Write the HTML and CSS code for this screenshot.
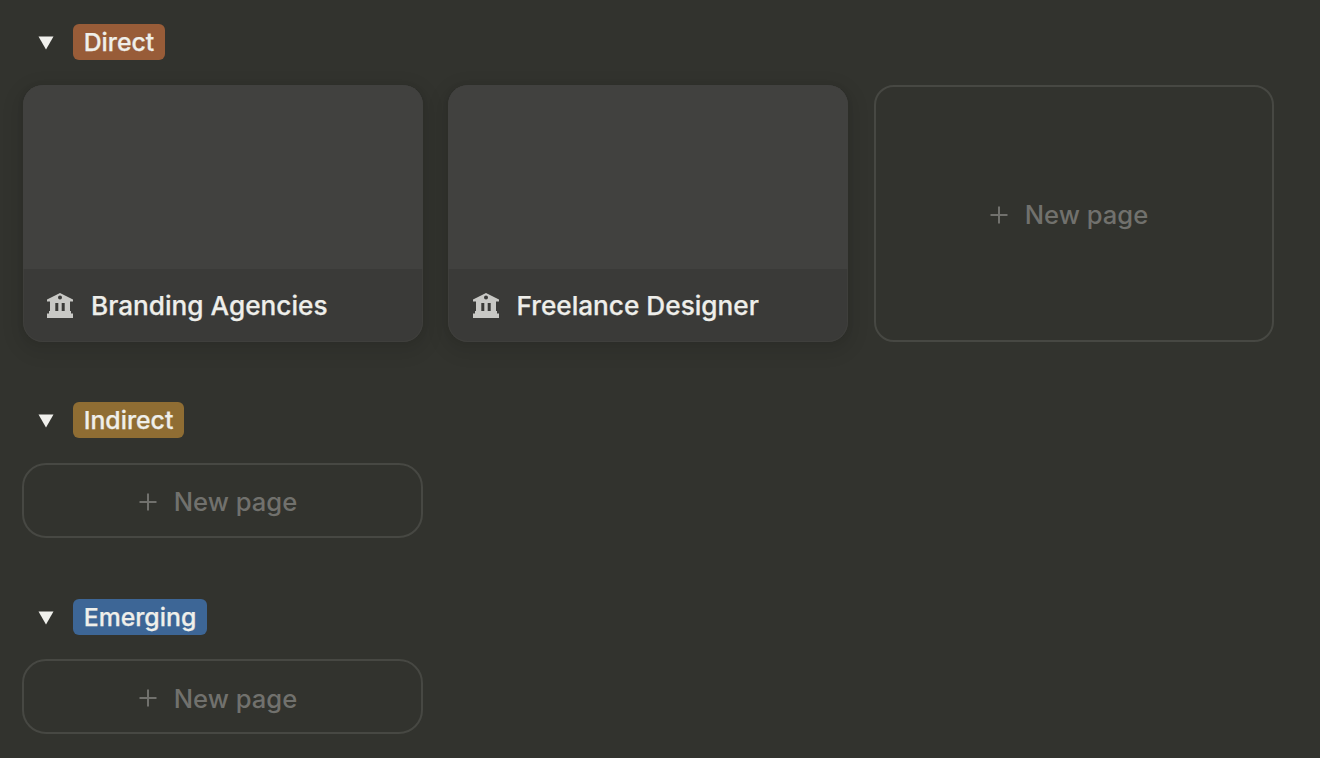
FILE: index.html
```html
<!DOCTYPE html>
<html lang="en">
<head>
<meta charset="utf-8">
<title>Board</title>
<link rel="stylesheet" href="styles.css">
</head>
<body>
<main class="board">
  <section class="group">
    <header class="group-head">
      <svg class="caret" viewBox="0 0 16 14"><path d="M0.5 0.5H15.5L8 13.5Z"/></svg>
      <span class="tag tag-direct">Direct</span>
    </header>
    <div class="cards">
      <article class="card">
        <div class="card-cover"></div>
        <div class="card-title">
          <svg class="bank" viewBox="0 0 26 25"><path fill-rule="evenodd" d="M13 0L26 6.500V8.500H23V18H24V20.500H26V25H0V20.500H2V18H3V8.500H0V6.500ZM13 2.500A2 2 0 1 0 13 6.500A2 2 0 1 0 13 2.500ZM8.300 10V18H11.300V10ZM14.700 10V18H17.700V10Z"/></svg>
          <span>Branding Agencies</span>
        </div>
      </article>
      <article class="card">
        <div class="card-cover"></div>
        <div class="card-title">
          <svg class="bank" viewBox="0 0 26 25"><path fill-rule="evenodd" d="M13 0L26 6.500V8.500H23V18H24V20.500H26V25H0V20.500H2V18H3V8.500H0V6.500ZM13 2.500A2 2 0 1 0 13 6.500A2 2 0 1 0 13 2.500ZM8.300 10V18H11.300V10ZM14.700 10V18H17.700V10Z"/></svg>
          <span>Freelance Designer</span>
        </div>
      </article>
      <div class="new-page new-tall">
        <svg class="plus" viewBox="0 0 18 18"><path d="M9 0.500V17.500M0.500 9H17.500"/></svg>
        <span>New page</span>
      </div>
    </div>
  </section>
  <section class="group">
    <header class="group-head">
      <svg class="caret" viewBox="0 0 16 14"><path d="M0.5 0.5H15.5L8 13.5Z"/></svg>
      <span class="tag tag-indirect">Indirect</span>
    </header>
    <div class="cards">
      <div class="new-page new-short">
        <svg class="plus" viewBox="0 0 18 18"><path d="M9 0.500V17.500M0.500 9H17.500"/></svg>
        <span>New page</span>
      </div>
    </div>
  </section>
  <section class="group">
    <header class="group-head">
      <svg class="caret" viewBox="0 0 16 14"><path d="M0.5 0.5H15.5L8 13.5Z"/></svg>
      <span class="tag tag-emerging">Emerging</span>
    </header>
    <div class="cards">
      <div class="new-page new-short">
        <svg class="plus" viewBox="0 0 18 18"><path d="M9 0.500V17.500M0.500 9H17.500"/></svg>
        <span>New page</span>
      </div>
    </div>
  </section>
</main>
</body>
</html>
```

FILE: styles.css
```css
html, body {
  margin: 0;
  height: 100%;
  overflow: hidden;
  background: #32332e;
}
body {
  font-family: Inter, "Liberation Sans", sans-serif;
  font-weight: 500;
}
.board {
  display: flex;
  flex-direction: column;
  gap: 60.8px;
  padding: 24px 0 0 22.5px;
}
.group-head {
  display: flex;
  align-items: center;
  height: 36px;
  margin-bottom: 24.5px;
}
.caret {
  width: 16px;
  height: 14px;
  margin: 2px 19.5px 0 15px;
  fill: #f0f0ec;
}
.tag {
  display: block;
  height: 36px;
  line-height: 36px;
  padding: 0 11px 0 10.7px;
  border-radius: 6px;
  font-size: 24.8px;
  color: #efefea;
  -webkit-text-stroke: 0.25px #efefea;
}
.tag-direct { background: #985c38; }
.tag-indirect { background: #8f6d33; }
.tag-emerging { background: #3d6696; }
.cards {
  display: flex;
  gap: 25.5px;
}
.card {
  width: 400px;
  height: 257px;
  box-sizing: border-box;
  border-radius: 20px;
  overflow: hidden;
  display: flex;
  flex-direction: column;
  background: #3a3a38;
  box-shadow: inset 0 0 0 1px #3f3f3c, 0 6px 14px 10px rgba(0, 0, 0, 0.06), 0 1px 4px 2px rgba(0, 0, 0, 0.05);
}
.card-cover {
  height: 184px;
  background: #41413f;
}
.card-title {
  flex: 1;
  display: flex;
  align-items: center;
  padding-left: 24.5px;
  gap: 18px;
  font-size: 26.2px;
  color: #eeeeea;
  -webkit-text-stroke: 0.25px #eeeeea;
}
.bank {
  width: 26px;
  height: 25px;
  fill: #c8c8c5;
}
.new-page {
  width: 400px;
  box-sizing: border-box;
  border: 2px solid #474843;
  padding: 3px 9px 0 0;
  display: flex;
  align-items: center;
  justify-content: center;
  gap: 17px;
  font-size: 25.6px;
  color: #71716d;
}
.new-tall {
  height: 257px;
  border-radius: 20px;
}
.new-short {
  width: 401px;
  margin-left: -0.5px;
  height: 75px;
  border-radius: 24px;
}
.plus {
  width: 18px;
  height: 18px;
  fill: none;
  stroke: #71716d;
  stroke-width: 2;
}
```
